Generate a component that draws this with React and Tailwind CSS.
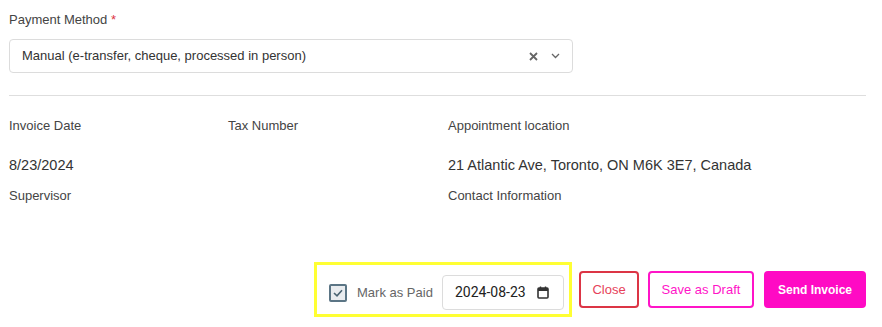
import React from "react";

const CalendarIcon = () => (
  <svg width="12" height="13" viewBox="0 0 12 13" fill="none">
    <rect x="1" y="2" width="10" height="10" rx="1" stroke="#333" strokeWidth="1.6" />
    <rect x="1" y="2" width="10" height="3" fill="#333" />
    <line x1="3.5" y1="0.5" x2="3.5" y2="2.5" stroke="#333" strokeWidth="1.4" />
    <line x1="8.5" y1="0.5" x2="8.5" y2="2.5" stroke="#333" strokeWidth="1.4" />
  </svg>
);

export default function App() {
  return (
    <div
      className="w-[882px] h-[327px] bg-white pl-[9px] pr-[16px] pt-[12px] text-[#444]"
      style={{ fontFamily: "'Liberation Sans', Arial, sans-serif" }}
    >
      {/* Payment method */}
      <div className="text-[13px] leading-[16px] text-[#444]">
        Payment Method <span className="text-[#dc3545]">*</span>
      </div>
      <div className="mt-[11px] w-[564px] h-[34px] border border-[#dcdcdc] rounded-[4px] flex items-center pl-[12px] pr-[12px]">
        <span className="flex-1 text-[13px] text-[#333]">
          Manual (e-transfer, cheque, processed in person)
        </span>
        <svg width="9" height="9" viewBox="0 0 9 9" className="mr-[13px]">
          <path d="M1 1L8 8M8 1L1 8" stroke="#666" strokeWidth="1.8" />
        </svg>
        <svg width="9" height="6" viewBox="0 0 9 6">
          <path d="M1 1L4.5 4.5L8 1" stroke="#666" strokeWidth="1.3" fill="none" />
        </svg>
      </div>

      <div className="mt-[22px] border-t border-[#dedede]" />

      {/* Invoice details */}
      <div className="grid grid-cols-[219px_220px_1fr] mt-[22px]">
        <div className="text-[13px] leading-[16px]">Invoice Date</div>
        <div className="text-[13px] leading-[16px]">Tax Number</div>
        <div className="text-[13px] leading-[16px]">Appointment location</div>

        <div className="mt-[21px] text-[14.5px] leading-[20px] text-[#333]">8/23/2024</div>
        <div className="mt-[21px]" />
        <div className="mt-[21px] text-[14.5px] leading-[20px] text-[#333]">
          21 Atlantic Ave, Toronto, ON M6K 3E7, Canada
        </div>

        <div className="mt-[13px] text-[13px] leading-[16px]">Supervisor</div>
        <div className="mt-[13px]" />
        <div className="mt-[13px] text-[13px] leading-[16px]">Contact Information</div>
      </div>

      {/* Footer */}
      <div className="mt-[58px] flex items-center justify-end">
        <div className="w-[258px] border-[3px] border-[#ffff33] flex items-center pl-[12px] pr-[5px] pt-[10px] pb-[4px]">
          <div className="w-[18px] h-[18px] border-2 border-[#5b7585] rounded-[2px] bg-[#e9ecef] flex items-center justify-center">
            <svg width="10" height="8" viewBox="0 0 10 8">
              <path d="M1 4L4 6.8L9 1.2" stroke="#4a6372" strokeWidth="1.6" fill="none" />
            </svg>
          </div>
          <span className="ml-[10px] text-[13px] text-[#666]">Mark as Paid</span>
          <div className="ml-auto w-[122px] h-[35px] border border-[#dcdcdc] rounded-[4px] flex items-center pl-[12px] pr-[14px] justify-between">
            <span className="text-[14px] text-[#222]" style={{ fontFamily: "Roboto, sans-serif" }}>2024-08-23</span>
            <CalendarIcon />
          </div>
        </div>
        <button className="ml-[7px] w-[60px] h-[37px] border-2 border-[#dc3545] rounded-[4px] text-[13px] text-[#e6425a]">
          Close
        </button>
        <button className="ml-[9px] w-[106px] h-[37px] border-2 border-[#ff14c8] rounded-[4px] text-[13px] text-[#ff14c8]">
          Save as Draft
        </button>
        <button className="ml-[10px] w-[102px] h-[37px] bg-[#ff0ac4] rounded-[4px] text-[12px] font-bold text-white">
          Send Invoice
        </button>
      </div>
    </div>
  );
}
